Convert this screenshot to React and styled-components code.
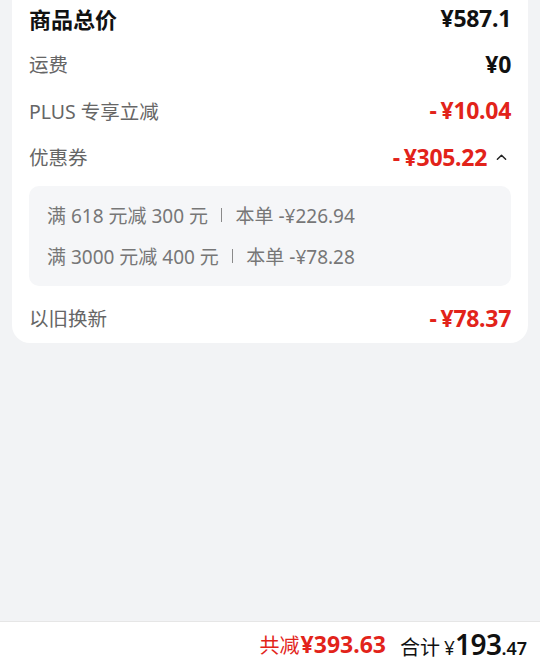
import React from "react";
import styled, { createGlobalStyle } from "styled-components";

const GlobalStyle = createGlobalStyle`
  html, body {
    margin: 0;
    padding: 0;
    background: #f2f3f5;
  }
  * {
    box-sizing: border-box;
  }
`;

const coupons = [
  { rule: "满 618 元减 300 元", share: "-¥226.94" },
  { rule: "满 3000 元减 400 元", share: "-¥78.28" },
];

const Minus = ({ children }) => (
  <>
    <Dash>-</Dash>
    {children}
  </>
);

const App = () => {
  return (
    <Page>
      <GlobalStyle />
      <Content>
        <Card>
          <Row first>
            <Title>商品总价</Title>
            <Value>¥587.1</Value>
          </Row>
          <Row>
            <Label>运费</Label>
            <Value>¥0</Value>
          </Row>
          <Row>
            <Label>PLUS 专享立减</Label>
            <Value red>
              <Minus>¥10.04</Minus>
            </Value>
          </Row>
          <Row>
            <Label>优惠券</Label>
            <ValueGroup>
              <Value red>
                <Minus>¥305.22</Minus>
              </Value>
              <Chevron viewBox="0 0 12 8">
                <path d="M1.5 6.5 L6 2 L10.5 6.5" />
              </Chevron>
            </ValueGroup>
          </Row>
          <CouponPanel>
            {coupons.map((c) => (
              <CouponLine key={c.rule}>
                {c.rule}
                <Divider />
                本单 {c.share}
              </CouponLine>
            ))}
          </CouponPanel>
          <Row last>
            <Label>以旧换新</Label>
            <Value red>
              <Minus>¥78.37</Minus>
            </Value>
          </Row>
        </Card>
      </Content>
      <Footer>
        <Saved>
          共减<SavedAmount>¥393.63</SavedAmount>
        </Saved>
        <Total>
          合计<Yen>¥</Yen>
          <Big>193</Big>
          <Cents>.47</Cents>
        </Total>
      </Footer>
    </Page>
  );
};

export default App;

const Page = styled.div`
  min-height: 100vh;
  display: flex;
  flex-direction: column;
  font-family: "Noto Sans", "Noto Sans CJK SC", sans-serif;
`;

const Content = styled.div`
  flex: 1;
`;

const Card = styled.div`
  margin: 0 12px;
  padding: 0 17px 0;
  background: #fff;
  border-radius: 0 0 18px 18px;
`;

const Row = styled.div`
  height: ${({ first, last }) => (first ? "42px" : last ? "50px" : "46.5px")};
  padding-bottom: ${({ first, last }) => (first ? "6px" : last ? "0" : "3px")};
  display: flex;
  align-items: center;
  justify-content: space-between;
`;

const Title = styled.div`
  font-size: 22px;
  font-weight: 700;
  color: #111;
`;

const Label = styled.div`
  font-size: 19.5px;
  color: #666;
`;

const Value = styled.div`
  font-size: 23px;
  font-weight: 700;
  color: ${({ red }) => (red ? "#e2231a" : "#111")};
  letter-spacing: -0.3px;
  white-space: pre;
`;

const Dash = styled.span`
  margin-right: 4px;
`;

const ValueGroup = styled.div`
  display: flex;
  align-items: center;
  gap: 9px;
`;

const Chevron = styled.svg`
  width: 11px;
  height: 8px;
  margin-right: 4px;
  fill: none;
  stroke: #222;
  stroke-width: 1.6;
  stroke-linecap: round;
  stroke-linejoin: round;
`;

const CouponPanel = styled.div`
  margin: 4px 0 7px;
  padding: 9px 18px;
  background: #f5f6f8;
  border-radius: 10px;
`;

const CouponLine = styled.div`
  height: 41px;
  display: flex;
  align-items: center;
  font-size: 19px;
  color: #777;
  white-space: pre;
`;

const Divider = styled.span`
  display: inline-block;
  width: 1.5px;
  height: 14px;
  margin: 0 13px 0 13px;
  background: #8a8a8a;
`;

const Footer = styled.div`
  height: 44px;
  display: flex;
  align-items: center;
  justify-content: flex-end;
  gap: 14px;
  padding: 0 13px 0 0;
  background: #fff;
  border-top: 1px solid #e6e6e6;
`;

const Saved = styled.div`
  display: flex;
  align-items: baseline;
  font-size: 20px;
  color: #e2231a;
`;

const SavedAmount = styled.span`
  font-size: 23px;
  font-weight: 700;
  margin-left: 1px;
`;

const Total = styled.div`
  display: flex;
  align-items: baseline;
  font-size: 20px;
  color: #111;
`;

const Yen = styled.span`
  font-size: 19px;
  margin-left: 4px;
`;

const Big = styled.span`
  font-size: 28px;
  font-weight: 600;
  letter-spacing: -0.5px;
`;

const Cents = styled.span`
  font-size: 18px;
  font-weight: 600;
`;
